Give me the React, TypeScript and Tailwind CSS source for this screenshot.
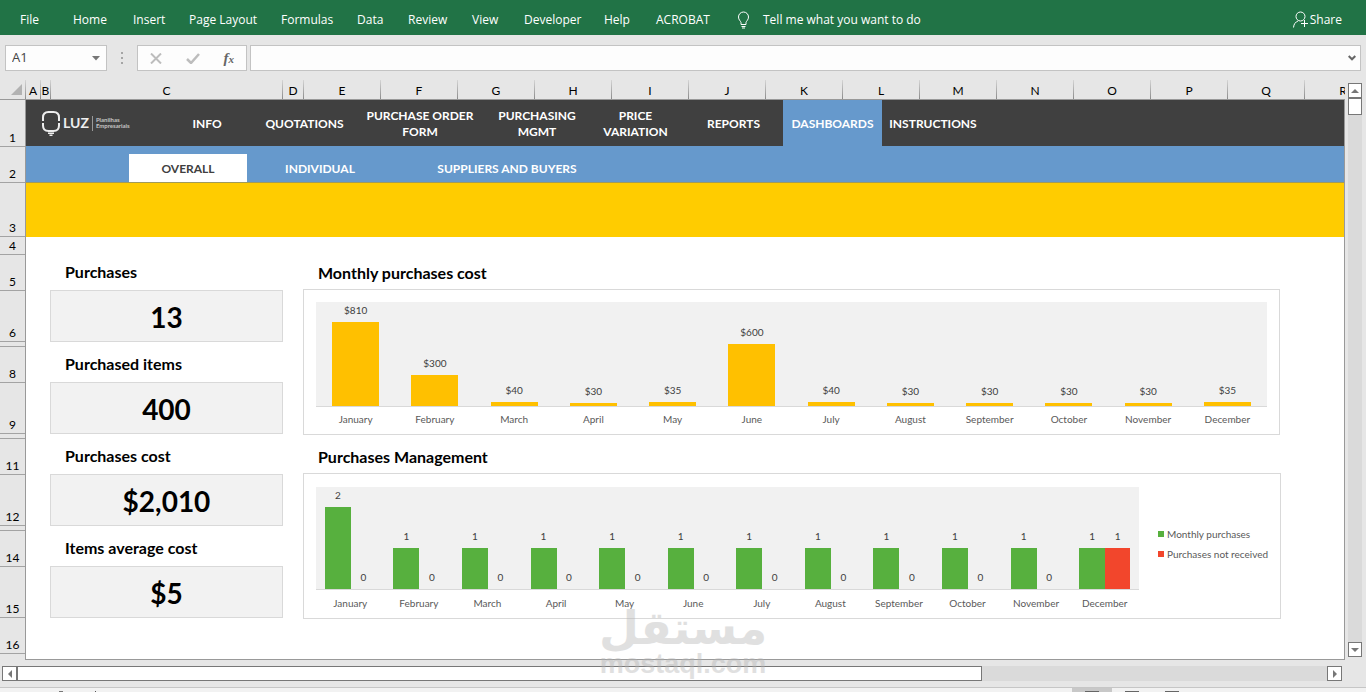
import { useState } from "react";
import clsx from "clsx";

const MENU = [
  { label: "File", width: "w-[53px]" },
  { label: "Home", width: "w-[60px]" },
  { label: "Insert", width: "w-[56px]" },
  { label: "Page Layout", width: "w-[92px]" },
  { label: "Formulas", width: "w-[76px]" },
  { label: "Data", width: "w-[51px]" },
  { label: "Review", width: "w-[64px]" },
  { label: "View", width: "w-[52px]" },
  { label: "Developer", width: "w-[80px]" },
  { label: "Help", width: "w-[52px]" },
  { label: "ACROBAT", width: "w-[80px]" },
];

const COLUMNS = [
  { label: "A", width: "w-[15px]" },
  { label: "B", width: "w-[10px]" },
  { label: "C", width: "w-[232px]" },
  { label: "D", width: "w-[21px]" },
  ..."EFGHIJKLMNOPQR".split("").map((label) => ({ label, width: "w-[77px]" })),
];

const ROWS = [
  { label: "1", height: "h-[47px]" },
  { label: "2", height: "h-9" },
  { label: "3", height: "h-[54px]" },
  { label: "4", height: "h-[18px]" },
  { label: "5", height: "h-9" },
  { label: "6", height: "h-[51px]" },
  { label: "", height: "h-[5px]" },
  { label: "8", height: "h-9" },
  { label: "9", height: "h-[51px]" },
  { label: "", height: "h-[5px]" },
  { label: "11", height: "h-9" },
  { label: "12", height: "h-[51px]" },
  { label: "", height: "h-[5px]" },
  { label: "14", height: "h-9" },
  { label: "15", height: "h-[51px]" },
  { label: "16", height: "h-9" },
];

const TABS = [
  { label: "INFO", width: "w-[98px]" },
  { label: "QUOTATIONS", width: "w-[97px]" },
  { label: "PURCHASE ORDER FORM", width: "w-[134px] px-3" },
  { label: "PURCHASING MGMT", width: "w-[100px] px-2" },
  { label: "PRICE VARIATION", width: "w-[97px] px-3" },
  { label: "REPORTS", width: "w-[99px]" },
  { label: "DASHBOARDS", width: "w-[99px]" },
  { label: "INSTRUCTIONS", width: "w-[102px]" },
];

const SUB_TABS = [
  { label: "OVERALL", width: "w-[118px]" },
  { label: "INDIVIDUAL", width: "w-[146px]" },
  { label: "SUPPLIERS AND BUYERS", width: "w-[228px]" },
];

const CARDS = [
  { title: "Purchases", value: "13" },
  { title: "Purchased items", value: "400" },
  { title: "Purchases cost", value: "$2,010" },
  { title: "Items average cost", value: "$5" },
];

const MONTHS = [
  { month: "January", cost: 810, bought: 2, missing: 0 },
  { month: "February", cost: 300, bought: 1, missing: 0 },
  { month: "March", cost: 40, bought: 1, missing: 0 },
  { month: "April", cost: 30, bought: 1, missing: 0 },
  { month: "May", cost: 35, bought: 1, missing: 0 },
  { month: "June", cost: 600, bought: 1, missing: 0 },
  { month: "July", cost: 40, bought: 1, missing: 0 },
  { month: "August", cost: 30, bought: 1, missing: 0 },
  { month: "September", cost: 30, bought: 1, missing: 0 },
  { month: "October", cost: 30, bought: 1, missing: 0 },
  { month: "November", cost: 30, bought: 1, missing: 0 },
  { month: "December", cost: 35, bought: 1, missing: 1 },
];

function Ribbon() {
  return (
    <header className="flex h-[35px] shrink-0 items-center bg-[#217346] pt-1 pl-5 font-['Open_Sans',sans-serif] text-xs text-white">
      <nav className="flex">
        {MENU.map((item) => (
          <button key={item.label} type="button" className={clsx("shrink-0 text-left whitespace-nowrap", item.width)}>
            {item.label}
          </button>
        ))}
      </nav>
      <button type="button" className="flex items-center gap-3 whitespace-nowrap">
        <svg width="15" height="18" viewBox="0 0 15 18" fill="none" stroke="currentColor">
          <path d="M5 13.5V11.5C4.6 9.8 2.5 9 2.5 6a5 5 0 0 1 10 0c0 3-2.100 3.800-2.500 5.500v2zM5.500 15.500h4M6 17h3" />
        </svg>
        Tell me what you want to do
      </button>
      <button type="button" className="mr-6 ml-auto flex items-center gap-0.5">
        <svg width="15" height="17" viewBox="0 0 15 17" fill="none" stroke="currentColor">
          <circle cx="7.500" cy="5.500" r="4.500" />
          <path d="M.5 16.500c.3-3.500 2-5.500 4.500-6.500M8 12.500h7M11.500 9v7" />
        </svg>
        Share
      </button>
    </header>
  );
}

function FormulaBar() {
  const [formula, setFormula] = useState("");
  const [cell, setCell] = useState("A1");

  return (
    <div className="flex h-[45px] shrink-0 items-center px-[5px] pt-px">
      <div className="flex h-[26px] w-[102px] items-center border border-[#c3c3c3] bg-[#fdfdfd] px-1.5">
        <input
          aria-label="Name box"
          value={cell}
          onChange={(e) => setCell(e.target.value)}
          className="w-full min-w-0 bg-transparent font-['Open_Sans',sans-serif] text-[13px] text-[#444] outline-none"
        />
        <svg width="8" height="5" viewBox="0 0 8 5" className="shrink-0 fill-[#777]">
          <path d="M0 0h8L4 4.500z" />
        </svg>
      </div>
      <div className="flex w-[30px] flex-col items-center gap-[3px]">
        <span className="size-0.5 bg-[#a5a5a5]" />
        <span className="size-0.5 bg-[#a5a5a5]" />
        <span className="size-0.5 bg-[#a5a5a5]" />
      </div>
      <div className="flex h-[26px] w-[110px] items-center justify-between border border-[#c3c3c3] bg-[#fdfdfd] px-3">
        <button type="button" aria-label="Cancel">
          <svg width="12" height="11" viewBox="0 0 12 11" className="stroke-[#bdbdbd] stroke-2">
            <path d="M1 .5l10 10M11 .5l-10 10" />
          </svg>
        </button>
        <button type="button" aria-label="Enter">
          <svg width="14" height="11" viewBox="0 0 14 11" className="fill-none stroke-[#bdbdbd] stroke-[2.500]">
            <path d="M1 6l4 4 8-9" />
          </svg>
        </button>
        <button
          type="button"
          aria-label="Insert function"
          className="font-['Liberation_Serif',serif] text-[15px] leading-4 font-bold text-[#666] italic"
        >
          f<span className="text-[11px]">x</span>
        </button>
      </div>
      <div className="ml-[3px] flex h-[26px] flex-1 items-center border border-[#c3c3c3] bg-[#fdfdfd] px-1">
        <input
          aria-label="Formula"
          value={formula}
          onChange={(e) => setFormula(e.target.value)}
          className="w-full min-w-0 bg-transparent text-xs outline-none"
        />
        <svg width="8" height="6" viewBox="0 0 8 6" className="shrink-0 fill-none stroke-[#666] stroke-2">
          <path d="M.7 1L4 4.300 7.300 1" />
        </svg>
      </div>
    </div>
  );
}

function ColumnHeaders() {
  return (
    <div className="flex h-5 shrink-0 overflow-hidden border-b border-[#999] text-xs">
      <div className="flex w-[26px] shrink-0 items-end justify-end gap-[3px]">
        <svg width="11" height="15" viewBox="0 0 11 15" className="fill-[#b2b2b2]">
          <path d="M11 0v11H0z" />
        </svg>
        <span className="h-[19px] w-px bg-linear-to-b from-[#d5d5d5] to-[#8c8c8c]" />
      </div>
      {COLUMNS.map((col) => (
        <div key={col.label} className={clsx("flex shrink-0", col.width)}>
          <span className="flex min-w-0 flex-1 items-center justify-center pt-0.5">{col.label}</span>
          <span className="w-px bg-linear-to-b from-[#d5d5d5] to-[#8c8c8c]" />
        </div>
      ))}
    </div>
  );
}

function RowHeaders() {
  return (
    <div className="w-[26px] shrink-0 border-r border-[#999] text-xs">
      {ROWS.map((row, i) => (
        <div
          key={i}
          className={clsx("flex items-end justify-center border-b border-[#a3a3a3] leading-4", row.height)}
        >
          {row.label}
        </div>
      ))}
    </div>
  );
}

function Logo() {
  return (
    <div className="flex w-[132px] shrink-0 items-center gap-[3px] pl-4 text-[#eee]">
      <svg width="18" height="25" viewBox="0 0 18 25" fill="none" stroke="currentColor" strokeWidth="2">
        <path d="M1 10V6.500Q1 1 6.500 1h5Q17 1 17 6.500V10M1 12v2.500Q1 20 6.500 20h5q5.500 0 5.500-5.500V12" />
        <path d="M6 22.200h6M7.500 24.200h3" strokeWidth="1.500" />
      </svg>
      <span className="text-sm leading-4">LUZ</span>
      <span className="h-[15px] w-px bg-[#999]" />
      <span className="text-[6px] leading-[6px] text-[#c4c4c4]">
        Planilhas
        <br />
        Empresariais
      </span>
    </div>
  );
}

function SheetTabs() {
  const [tab, setTab] = useState("DASHBOARDS");
  const [subTab, setSubTab] = useState("OVERALL");

  return (
    <>
      <nav className="flex h-[46px] shrink-0 bg-[#404040] text-xs leading-4 font-bold text-white">
        <Logo />
        {TABS.map((item) => (
          <button
            key={item.label}
            type="button"
            onClick={() => setTab(item.label)}
            className={clsx("shrink-0 pt-0.5", item.width, tab === item.label && "bg-[#6699cc]")}
          >
            {item.label}
          </button>
        ))}
      </nav>
      <nav className="flex h-[37px] shrink-0 border-b border-[#a09a5a] bg-[#6699cc] pt-2 pl-[103px] text-xs font-bold text-white">
        {SUB_TABS.map((item) => (
          <button
            key={item.label}
            type="button"
            onClick={() => setSubTab(item.label)}
            className={clsx("shrink-0 pt-0.5", item.width, subTab === item.label && "bg-white text-[#404040]")}
          >
            {item.label}
          </button>
        ))}
      </nav>
    </>
  );
}

function CostChart() {
  return (
    <section>
      <h2 className="flex h-[35px] items-center pt-0.5 pl-[15px] text-base font-bold">Monthly purchases cost</h2>
      <div className="mr-px h-[146px] border border-[#d9d9d9] px-3 pt-3">
        <div className="flex h-[105px] border-b border-[#d9d9d9] bg-[#f1f1f1]">
          {MONTHS.map((m) => (
            <div key={m.month} className="flex flex-1 flex-col items-center justify-end">
              <span className="mb-1 text-[10px] leading-4 text-[#404040]">${m.cost}</span>
              <div className="w-[47px] bg-[#ffc000]" style={{ height: Math.round((m.cost / 810) * 84) }} />
            </div>
          ))}
        </div>
        <div className="flex pt-1 text-[10px] leading-4 text-[#595959]">
          {MONTHS.map((m) => (
            <span key={m.month} className="flex-1 text-center">
              {m.month}
            </span>
          ))}
        </div>
      </div>
    </section>
  );
}

function ManagementChart() {
  return (
    <section>
      <h2 className="flex h-[35px] items-center pt-0.5 pl-[15px] text-base font-bold">Purchases Management</h2>
      <div className="flex h-[146px] border border-[#d9d9d9] pt-[13px] pl-3">
        <div className="flex-1">
          <div className="flex h-[103px] border-b border-[#d9d9d9] bg-[#f1f1f1]">
            {MONTHS.map((m) => (
              <div key={m.month} className="flex flex-1 items-end justify-center text-[10px] leading-4 text-[#404040]">
                <div className="w-[26px] text-center">
                  <div className="mb-1">{m.bought}</div>
                  <div className="bg-[#57b03e]" style={{ height: m.bought * 41 }} />
                </div>
                <div className="w-[25px] text-center">
                  <div className="mb-1">{m.missing}</div>
                  <div className="bg-[#f2462c]" style={{ height: m.missing * 41 }} />
                </div>
              </div>
            ))}
          </div>
          <div className="flex pt-[5px] text-[10px] leading-4 text-[#595959]">
            {MONTHS.map((m) => (
              <span key={m.month} className="flex-1 text-center">
                {m.month}
              </span>
            ))}
          </div>
        </div>
        <ul className="w-[141px] shrink-0 pt-[37px] pl-[19px] text-[10px] leading-5 whitespace-nowrap text-[#595959]">
          <li className="flex items-center gap-[3px]">
            <span className="size-1.5 bg-[#57b03e]" />
            Monthly purchases
          </li>
          <li className="flex items-center gap-[3px]">
            <span className="size-1.5 bg-[#f2462c]" />
            Purchases not received
          </li>
        </ul>
      </div>
    </section>
  );
}

function Dashboard() {
  return (
    <div className="flex gap-5 pt-[17px] pr-[63px] pl-6">
      <div className="flex w-[233px] shrink-0 flex-col gap-1">
        {CARDS.map((card) => (
          <section key={card.title}>
            <h2 className="flex h-9 items-center pl-[15px] text-base font-bold">{card.title}</h2>
            <p className="flex h-[52px] items-center justify-center border border-[#d9d9d9] bg-[#f2f2f2] pt-0.5 text-[28px] font-bold">
              {card.value}
            </p>
          </section>
        ))}
      </div>
      <div className="flex min-w-0 flex-1 flex-col gap-[3px]">
        <CostChart />
        <ManagementChart />
      </div>
    </div>
  );
}

function VerticalScroll() {
  return (
    <div className="flex w-[21px] shrink-0 flex-col pt-[3px] pr-1 pb-[3px] pl-[3px]">
      <div className="flex flex-1 flex-col bg-[#dadada]">
        <button
          type="button"
          aria-label="Scroll up"
          className="flex h-[15px] items-center justify-center border border-[#777] bg-white"
        >
          <svg width="8" height="4" viewBox="0 0 8 4" className="fill-[#777]">
            <path d="M4 0l4 4H0z" />
          </svg>
        </button>
        <div className="h-[17px] border border-[#777] bg-white" />
        <button
          type="button"
          aria-label="Scroll down"
          className="mt-auto flex h-[15px] items-center justify-center border border-[#777] bg-white"
        >
          <svg width="8" height="4" viewBox="0 0 8 4" className="fill-[#777]">
            <path d="M0 0h8L4 4z" />
          </svg>
        </button>
      </div>
    </div>
  );
}

function HorizontalScroll() {
  return (
    <div className="flex h-[27px] shrink-0 py-[6px] pr-[24px] pl-0.5">
      <div className="flex flex-1 bg-[#dadada]">
        <button
          type="button"
          aria-label="Scroll left"
          className="flex w-[15px] items-center justify-center border border-[#777] bg-white"
        >
          <svg width="4" height="8" viewBox="0 0 4 8" className="fill-[#777]">
            <path d="M4 0v8L0 4z" />
          </svg>
        </button>
        <div className="w-[72%] border border-[#777] bg-white" />
        <button
          type="button"
          aria-label="Scroll right"
          className="ml-auto flex w-[15px] items-center justify-center border border-[#777] bg-white"
        >
          <svg width="4" height="8" viewBox="0 0 4 8" className="fill-[#777]">
            <path d="M0 0v8l4-4z" />
          </svg>
        </button>
      </div>
    </div>
  );
}

function StatusBar() {
  return (
    <footer className="flex h-[5px] shrink-0 items-end border-t border-[#c6c6c6] bg-[#f2f2f2] pr-[174px] pl-[59px]">
      <span className="h-px w-1 bg-[#777]" />
      <span className="ml-8 h-px w-px bg-[#555]" />
      <div className="ml-auto flex h-full items-end">
        <span className="flex h-full w-10 items-end justify-center bg-[#c8c8c8]">
          <span className="h-px w-3.5 bg-[#666]" />
        </span>
        <span className="flex w-10 justify-center">
          <span className="h-px w-3.5 bg-[#666]" />
        </span>
        <span className="flex w-10 justify-center">
          <span className="h-px w-3.5 bg-[#666]" />
        </span>
      </div>
    </footer>
  );
}

function Watermark() {
  return (
    <div className="pointer-events-none absolute bottom-4 left-1/2 flex w-[166px] -translate-x-1/2 flex-col items-center text-[#b4b4b4] opacity-40">
      <span lang="ar" dir="rtl" className="font-['DejaVu_Sans',sans-serif] text-[46px] leading-[48px] font-bold">
        مستقل
      </span>
      <span className="font-['Liberation_Sans',sans-serif] text-[27px] leading-6 font-bold">mostaql.com</span>
    </div>
  );
}

export default function App() {
  return (
    <div className="relative flex h-screen flex-col overflow-hidden bg-[#e6e6e6] font-[Lato,sans-serif] text-black">
      <Ribbon />
      <FormulaBar />
      <div className="flex min-h-0 flex-1">
        <div className="flex min-w-0 flex-1 flex-col">
          <ColumnHeaders />
          <div className="flex min-h-0 flex-1">
            <RowHeaders />
            <main className="flex min-w-0 flex-1 flex-col border-r border-b border-[#999] bg-white">
              <SheetTabs />
              <div className="h-[54px] shrink-0 bg-[#ffcc00]" />
              <Dashboard />
            </main>
          </div>
        </div>
        <VerticalScroll />
      </div>
      <HorizontalScroll />
      <StatusBar />
      <Watermark />
    </div>
  );
}
